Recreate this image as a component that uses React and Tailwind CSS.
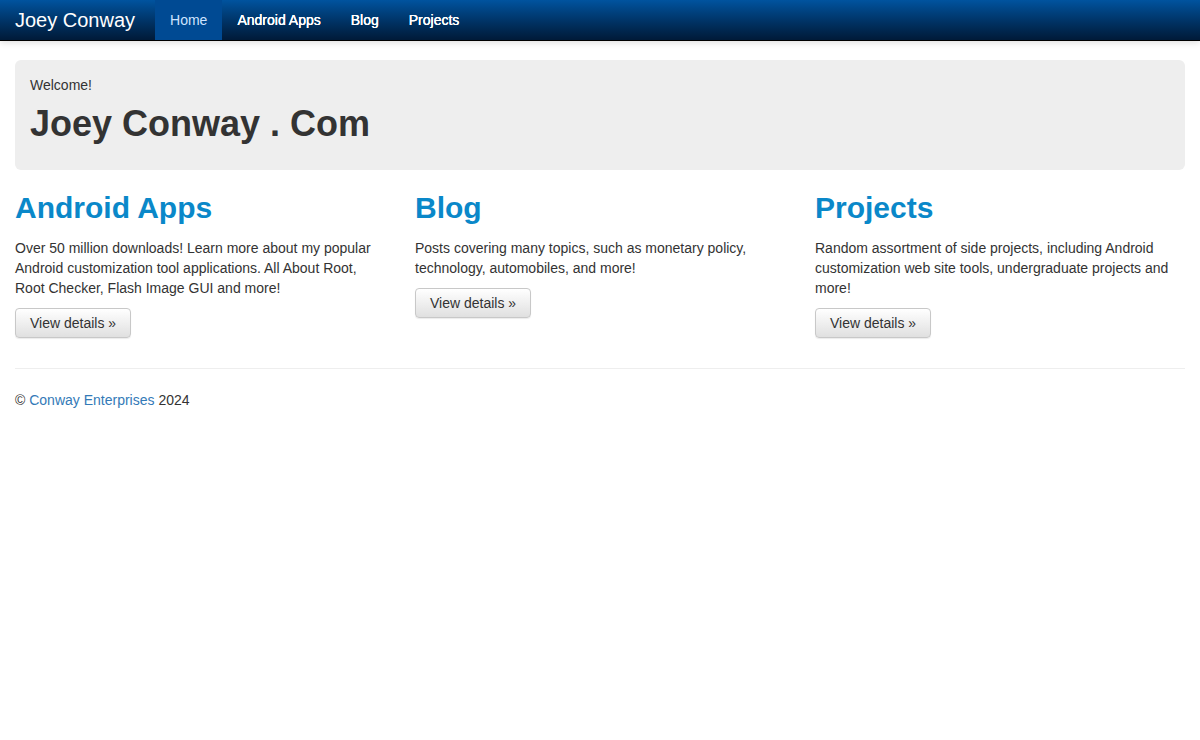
const navLinks = [
  { label: "Home", active: true },
  { label: "Android Apps" },
  { label: "Blog" },
  { label: "Projects" },
];

const sections = [
  {
    title: "Android Apps",
    text: "Over 50 million downloads! Learn more about my popular Android customization tool applications. All About Root, Root Checker, Flash Image GUI and more!",
  },
  {
    title: "Blog",
    text: "Posts covering many topics, such as monetary policy, technology, automobiles, and more!",
  },
  {
    title: "Projects",
    text: "Random assortment of side projects, including Android customization web site tools, undergraduate projects and more!",
  },
];

const Navbar = () => (
  <nav className="h-[41px] bg-gradient-to-b from-[#00539f] to-[#001a38] border-b border-black shadow-[0_2px_6px_rgba(0,0,0,0.12)]">
    <div className="flex items-center h-10 px-[15px]">
      <a className="text-[20px] text-white pr-5 leading-10">Joey Conway</a>
      <ul className="flex h-10">
        {navLinks.map((link) => (
          <li key={link.label}>
            <a
              className={`block px-[15px] leading-10 text-[14px] ${
                link.active
                  ? "bg-[#004a93] text-[#cfe4ff]"
                  : "text-white [text-shadow:0_0_0.6px_#fff,0_0_0.6px_#fff]"
              }`}
            >
              {link.label}
            </a>
          </li>
        ))}
      </ul>
    </div>
  </nav>
);

export default function App() {
  return (
    <div className="min-h-[740px] bg-white text-[#333] text-[14px] leading-5 font-['Liberation_Sans',Arial,sans-serif]">
      <Navbar />
      <div className="px-[15px] pt-[19px]">
        <div className="bg-[#eeeeee] rounded-[6px] px-[15px] pt-[15px] pb-[16px]">
          <p className="leading-5">Welcome!</p>
          <h1 className="mt-[9px] mb-[10px] text-[36px] leading-[40px] font-bold text-[#333]">
            Joey Conway . Com
          </h1>
        </div>

        <div className="grid grid-cols-3 -mx-[15px]">
          {sections.map((s) => (
            <div key={s.title} className="px-[15px]">
              <h2 className="mt-[21px] mb-[14px] text-[30px] leading-[33px] font-bold text-[#0a88c9]">
                {s.title}
              </h2>
              <p className="mb-[10px]">{s.text}</p>
              <p className="mb-[10px]">
                <button className="h-[30px] px-[14px] border border-[#c8c8c8] rounded-[4px] bg-gradient-to-b from-white to-[#e0e0e0] text-[#333] leading-5 shadow-[0_1px_1px_rgba(0,0,0,0.08)]">
                  View details »
                </button>
              </p>
            </div>
          ))}
        </div>

        <hr className="mt-5 mb-[21px] border-t border-[#eeeeee]" />
        <footer>
          <p>
            © <a className="text-[#337ab7]">Conway Enterprises</a> 2024
          </p>
        </footer>
      </div>
    </div>
  );
}
